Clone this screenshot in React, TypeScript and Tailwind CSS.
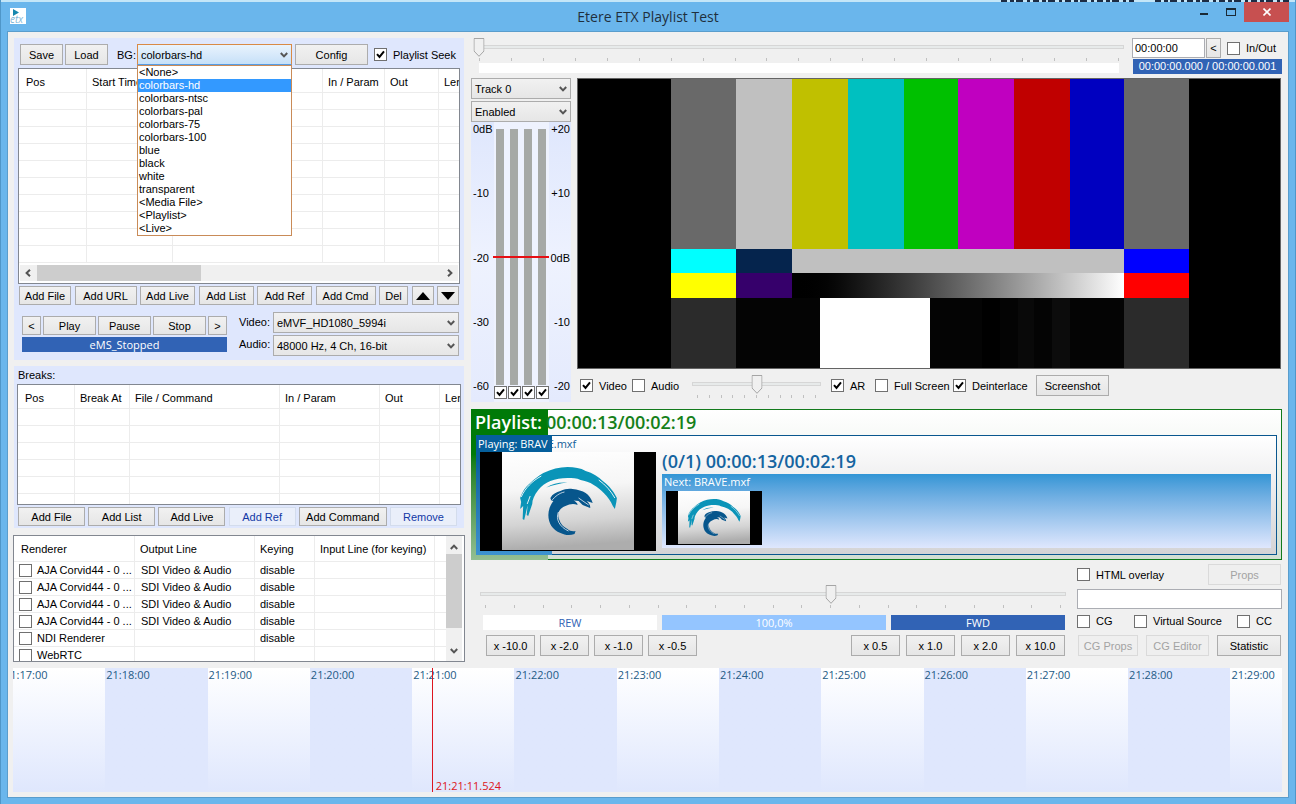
import { useState, type ReactNode } from 'react';
import clsx from 'clsx';

const BACKGROUNDS = [
  '<None>', 'colorbars-hd', 'colorbars-ntsc', 'colorbars-pal', 'colorbars-75', 'colorbars-100',
  'blue', 'black', 'white', 'transparent', '<Media File>', '<Playlist>', '<Live>',
];

const RENDERERS = [
  ['AJA Corvid44 - 0 ...', 'SDI Video & Audio', 'disable'],
  ['AJA Corvid44 - 0 ...', 'SDI Video & Audio', 'disable'],
  ['AJA Corvid44 - 0 ...', 'SDI Video & Audio', 'disable'],
  ['AJA Corvid44 - 0 ...', 'SDI Video & Audio', 'disable'],
  ['NDI Renderer', '', 'disable'],
  ['WebRTC', '', ''],
];

const MINUTES = [17, 18, 19, 20, 21, 22, 23, 24, 25, 26, 27, 28, 29];

function Button({ children, className, variant = 'normal', label }: {
  children: ReactNode;
  className?: string;
  variant?: 'normal' | 'flat' | 'disabled';
  label?: string;
}) {
  return (
    <button
      aria-label={label}
      disabled={variant === 'disabled'}
      className={clsx(
        'flex items-center justify-center border whitespace-nowrap shrink-0',
        variant === 'normal' && 'border-[#acacac] bg-linear-to-b from-[#f1f1f1] to-[#e6e6e6] text-black',
        variant === 'flat' && 'border-[#d3dcec] bg-[#eaeffa] text-[#1238a6]',
        variant === 'disabled' && 'border-[#dadada] bg-[#efefef] text-[#a3a3a3]',
        className
      )}
    >
      {children}
    </button>
  );
}

function Chevron({ className }: { className?: string }) {
  return (
    <svg viewBox="0 0 8 6" className={clsx('w-2 h-1.5 fill-none stroke-[#555] stroke-2 pointer-events-none', className)}>
      <path d="M0.8 1 L4 4.4 L7.2 1" />
    </svg>
  );
}

function Combo({ value, label, className, active }: { value: string; label: string; className?: string; active?: boolean }) {
  return (
    <div className={clsx('relative h-[21px]', className)}>
      <select
        aria-label={label}
        defaultValue={value}
        className={clsx(
          'appearance-none block w-full h-full border pl-[3px] outline-none',
          active
            ? 'border-[#d98a45] border-b-[#569de5] bg-linear-to-b from-[#e9f3fd] to-[#c6e0f8]'
            : 'border-[#acacac] bg-linear-to-b from-[#f1f1f1] to-[#e6e6e6]'
        )}
      >
        {active ? BACKGROUNDS.map((b) => <option key={b}>{b}</option>) : <option>{value}</option>}
      </select>
      <Chevron className="absolute right-1 top-2" />
    </div>
  );
}

function CheckBox({ checked, label, children, className }: {
  checked?: boolean;
  label?: string;
  children?: ReactNode;
  className?: string;
}) {
  return (
    <label className={clsx('flex items-center gap-1.5 whitespace-nowrap shrink-0', className)}>
      <span className="relative size-[13px] shrink-0">
        <input
          type="checkbox"
          defaultChecked={checked}
          aria-label={label}
          className="peer appearance-none block size-[13px] bg-white border border-[#707070]"
        />
        <svg viewBox="0 0 13 13" className="absolute inset-0 hidden peer-checked:block pointer-events-none fill-none stroke-black stroke-2">
          <path d="M3 6.2 L5.5 9 L10 3.4" />
        </svg>
      </span>
      {children}
    </label>
  );
}

function Slider({ value, ticks, label, className }: { value: number; ticks: number; label: string; className?: string }) {
  const [pos, setPos] = useState(value);
  return (
    <div className={clsx('relative', className)}>
      <div className="h-[19px] pt-[7px]">
        <div className="h-1 border border-[#d6d6d6] bg-[#e7eaea]" />
      </div>
      <div className="flex justify-between mx-[5px] mt-px h-[3px]">
        {Array.from({ length: ticks }, (_, i) => <i key={i} className="w-px bg-[#c0c0c0]" />)}
      </div>
      <div className="absolute top-0 inset-x-[5px]">
        <svg viewBox="0 0 11 19" className="absolute top-0 w-[11px] h-[19px] -translate-x-1/2" style={{ left: `${pos}%` }}>
          <path d="M0.5 0.5 H10.5 V13 L5.5 18.3 L0.5 13 Z" fill="#f0f0f0" stroke="#a5a5a5" />
        </svg>
      </div>
      <input
        type="range"
        aria-label={label}
        value={pos}
        onChange={(e) => setPos(Number(e.target.value))}
        className="absolute inset-0 w-full h-full opacity-0"
      />
    </div>
  );
}

function Grid({ headers, widths, rows, tail }: {
  headers: string[];
  widths: string[];
  rows: number;
  tail?: boolean;
}) {
  const cell = 'border-r border-b border-[#ececec] last:border-r-0';
  return (
    <table className="w-full table-fixed border-separate border-spacing-0">
      <colgroup>{widths.map((w, i) => <col key={i} className={w} />)}</colgroup>
      <thead>
        <tr>
          {headers.map((h) => (
            <th key={h} className={clsx(cell, 'h-6 pt-0.5 pb-0 pr-0 pl-[5px] first:pl-[7px] text-left font-normal whitespace-nowrap overflow-hidden')}>
              {h}
            </th>
          ))}
        </tr>
      </thead>
      <tbody>
        {Array.from({ length: rows }, (_, r) => (
          <tr key={r}>{headers.map((h) => <td key={h} className={clsx(cell, 'p-0 h-[17px]')} />)}</tr>
        ))}
        {tail && <tr>{headers.map((h) => <td key={h} className="p-0 h-2.5 border-r border-[#ececec] last:border-r-0" />)}</tr>}
      </tbody>
    </table>
  );
}

function Wave({ className }: { className?: string }) {
  return (
    <div className={clsx('bg-black flex justify-center pb-px', className)}>
      <svg viewBox="0 0 131 98" preserveAspectRatio="none" className="w-[75%] h-full">
        <defs>
          <linearGradient id="paper" x1="0" y1="0" x2="0.1" y2="1">
            <stop offset="0" stopColor="#ffffff" />
            <stop offset="0.4" stopColor="#f6f6f6" />
            <stop offset="0.75" stopColor="#d4d4d4" />
            <stop offset="1" stopColor="#adadad" />
          </linearGradient>
        </defs>
        <rect width="131" height="98" fill="url(#paper)" />
        <path
          fill="#0a94b8"
          d="M18 46 C20 40 23 35 28 31 C32 27 36 24 41 21 C49 17 57 15 65 15 C72 15 78 16 83 19 C90 21 96 25 100 29 C107 34 111 40 114 46 L113.5 50 L112 57 L110 54 C108 49 105 45 101 41 C98 38 95 35 91 33 C87 30 82 29 78 28 C74 26 70 26 65 26 C59 26 53 27 48 29 C43 31 39 34 36 38 C32 43 30 48 30 52 L26 64 L24.5 63 L25.5 53 L22 68 L20.5 67 L21 54 L18 57 L19 50 Z"
        />
        <path fill="none" stroke="#fafafa" strokeWidth="0.9" d="M19 45 C23 36 30 29 39 24 M96 28 C103 33 108 39 112 46 M25 52 L28 44" />
        <path fill="#0a94b8" d="M44 35.5 C50 31.5 57 30 65 30.5 C57 31.5 51 33 44 35.5 Z" />
        <path
          fill="#07568c"
          d="M48 46 C50 42 54 40 58 39 C62 37 66 36.5 70 37 C75 37.5 80 39 83 41 C86 43 89 47 90 51 L84 49 C86 51 88 53 87.5 56 L80 53 L76 49 L71 48.5 C73 49.5 75 51 75 53 C71 51 67 52 63 54 C59 55.5 57 58 56 61 C55.5 64 56 66 57 68 C58 72 61 75 65 77 C67 79 70 79.5 73 79 L72 82 C67 84 62 83 58 81 C50 78 46 71 46 63 C46 58 48 53 51 49 L49 49 Z"
        />
        <path fill="none" stroke="#e8eef4" strokeWidth="0.8" d="M49 49 C53 44 57 41 62 40 M56 60 C53 67 57 75 66 79 M76 46 L86 53" />
      </svg>
    </div>
  );
}

function ColorBars() {
  return (
    <div className="flex-1 border border-[#646464] bg-black flex" role="img" aria-label="Video preview">
      <div className="flex-[93]" />
      <div className="flex-[65] flex flex-col">
        <div className="flex-[170] bg-[#696969]" />
        <div className="flex-[24] bg-[#00ffff]" />
        <div className="flex-[25] bg-[#ffff00]" />
        <div className="flex-[70] bg-[#2b2b2b]" />
      </div>
      <div className="flex-[388] flex flex-col">
        <div className="flex-[170] flex">
          <div className="flex-[56] bg-[#c0c0c0]" />
          <div className="flex-[56] bg-[#c0c000]" />
          <div className="flex-[56] bg-[#00c0c0]" />
          <div className="flex-[54] bg-[#00c000]" />
          <div className="flex-[56] bg-[#c000c0]" />
          <div className="flex-[56] bg-[#c00000]" />
          <div className="flex-[54] bg-[#0000c0]" />
        </div>
        <div className="flex-[24] flex">
          <div className="flex-[56] bg-[#05244d]" />
          <div className="flex-[332] bg-[#c0c0c0]" />
        </div>
        <div className="flex-[25] flex">
          <div className="flex-[56] bg-[#36006b]" />
          <div className="flex-[332] bg-linear-to-r from-black to-white" />
        </div>
        <div className="flex-[70] flex">
          <div className="flex-[84] bg-[#040404]" />
          <div className="flex-[110] bg-white" />
          <div className="flex-[52] bg-[#040404]" />
          <div className="flex-[18] bg-black" />
          <div className="flex-[18] bg-[#040404]" />
          <div className="flex-[16] bg-[#090909]" />
          <div className="flex-[18] bg-[#040404]" />
          <div className="flex-[18] bg-[#0c0c0c]" />
          <div className="flex-[54] bg-[#040404]" />
        </div>
      </div>
      <div className="flex-[65] flex flex-col">
        <div className="flex-[170] bg-[#696969]" />
        <div className="flex-[24] bg-[#0000ff]" />
        <div className="flex-[25] bg-[#ff0000]" />
        <div className="flex-[70] bg-[#2b2b2b]" />
      </div>
      <div className="flex-[91]" />
    </div>
  );
}

function TitleBar() {
  return (
    <header className="relative h-[31px] border-t-2 border-[#c4e6f8] flex items-start">
      {/* bottom edge of the text in the window behind */}
      <svg className="absolute right-1 -top-0.5 w-[290px] h-0.5">
        <path d="M0 1 H133 M154 1 H290" stroke="#1c2c44" strokeWidth="2" strokeDasharray="6 3 4 2 7 4 3 3" />
      </svg>
      <svg viewBox="0 0 16 16" className="w-4 h-4 mt-1.5 ml-[9px]">
        <rect width="16" height="16" fill="#fff" />
        <path d="M3 1 L9 4.5 L3 8 Z" fill="#1787ae" />
        <text x="0" y="14.5" fontSize="10" fontStyle="italic" fill="#7fb6d8" fontFamily="Open Sans, sans-serif">etx</text>
      </svg>
      <h1 className="absolute inset-x-0 top-[5px] text-center text-[14px] leading-5 text-[#1f2f3d] font-['Open_Sans',sans-serif]">
        Etere ETX Playlist Test
      </h1>
      <div className="relative ml-auto mr-1.5 flex">
        <button aria-label="Minimize" className="w-7 h-5 flex justify-center pt-[11px]"><i className="w-2 h-0.5 bg-[#1a2a36]" /></button>
        <button aria-label="Maximize" className="w-[26px] h-5 flex justify-center pt-1.5"><i className="w-2.5 h-2 border border-t-2 border-[#1a2a36]" /></button>
        <button aria-label="Close" className="w-[45px] h-5 bg-[#c75050] flex items-center justify-center">
          <svg viewBox="0 0 8 8" className="size-2 stroke-white stroke-[1.6]"><path d="M0.5 0.5 L7.5 7.5 M7.5 0.5 L0.5 7.5" /></svg>
        </button>
      </div>
    </header>
  );
}

function PlaylistPanel() {
  const [bg, setBg] = useState('colorbars-hd');
  return (
    <section className="mx-px px-1 pt-1.5 pb-1 bg-[#dfe7fd]">
      <div className="flex items-center h-[21px] pl-0.5">
        <Button className="w-[43px] h-[21px]">Save</Button>
        <Button className="w-[43px] h-[21px] ml-0.5">Load</Button>
        <span className="w-[29px] pl-[9px] shrink-0">BG:</span>
        <div className="relative w-[155px] shrink-0">
          <Combo active value="colorbars-hd" label="BG" />
          <ul role="listbox" aria-label="Backgrounds" className="absolute z-10 top-full inset-x-0 bg-white border border-[#c98b58] leading-[13px]">
            {BACKGROUNDS.map((b) => (
              <li
                key={b}
                role="option"
                aria-selected={b === bg}
                onClick={() => setBg(b)}
                className={clsx('px-px', b === bg && 'bg-[#3399ff] text-white')}
              >
                {b}
              </li>
            ))}
          </ul>
        </div>
        <Button className="w-[73px] h-[21px] ml-[3px]">Config</Button>
        <CheckBox checked className="ml-1.5">Playlist Seek</CheckBox>
      </div>

      <div className="mt-[3px] bg-white border border-[#828790]">
        <Grid
          headers={['Pos', 'Start Time', '', 'In / Param', 'Out', 'Len']}
          widths={['w-[68px]', 'w-[86px]', 'w-[150px]', 'w-[62px]', 'w-[54px]', '']}
          rows={10}
        />
        <div className="my-0.5 mx-px h-4 flex items-center bg-[#f0f0f0]">
          <Chevron className="w-4 rotate-90" />
          <div className="ml-px w-[164px] h-4 bg-[#cdcdcd]" />
          <Chevron className="w-4 -rotate-90 ml-auto" />
        </div>
      </div>

      <div className="mt-0.5 pl-px pr-px flex justify-between">
        <Button className="w-[52px] h-[19px]">Add File</Button>
        <Button className="w-[62px] h-[19px]">Add URL</Button>
        <Button className="w-[55px] h-[19px]">Add Live</Button>
        <Button className="w-[55px] h-[19px]">Add List</Button>
        <Button className="w-[55px] h-[19px]">Add Ref</Button>
        <Button className="w-[60px] h-[19px]">Add Cmd</Button>
        <Button className="w-[29px] h-[19px]">Del</Button>
        <Button className="w-[22px] h-[19px]" label="Move up">
          <svg viewBox="0 0 14 8" className="w-3.5 h-2"><path d="M0 8 L7 0 L14 8 Z" /></svg>
        </Button>
        <Button className="w-[22px] h-[19px]" label="Move down">
          <svg viewBox="0 0 14 8" className="w-3.5 h-2"><path d="M0 0 L7 8 L14 0 Z" /></svg>
        </Button>
      </div>

      <div className="mt-[7px] pl-1 pr-px flex">
        <div className="w-[205px] pt-1 shrink-0">
          <div className="flex gap-0.5">
            <Button className="w-[19px] h-[19px]">&lt;</Button>
            <Button className="w-[53px] h-[19px]">Play</Button>
            <Button className="w-[53px] h-[19px]">Pause</Button>
            <Button className="w-[53px] h-[19px]">Stop</Button>
            <Button className="w-[19px] h-[19px]">&gt;</Button>
          </div>
          <div className="mt-0.5 h-[15px] leading-[15px] bg-[#3163b5] text-white text-center font-['Open_Sans',sans-serif]">eMS_Stopped</div>
        </div>
        <div className="flex-1 ml-3 grid grid-cols-[34px_1fr] gap-y-0.5">
          <span className="pt-[3px]">Video:</span>
          <Combo value="eMVF_HD1080_5994i" label="Video" />
          <span className="pt-0.5">Audio:</span>
          <Combo value="48000 Hz, 4 Ch, 16-bit" label="Audio" />
        </div>
      </div>
    </section>
  );
}

function BreaksPanel() {
  return (
    <section className="mt-1.5 mx-px px-[3px] pb-0.5 bg-[#dfe7fd]">
      <h2 className="h-[18px] leading-[18px] pl-px">Breaks:</h2>
      <div className="bg-white border border-[#828790]">
        <Grid
          headers={['Pos', 'Break At', 'File / Command', 'In / Param', 'Out', 'Len']}
          widths={['w-[57px]', 'w-[55px]', 'w-[150px]', 'w-[100px]', 'w-[60px]', '']}
          rows={5}
          tail
        />
      </div>
      <div className="mt-0.5 pl-px pr-1 flex justify-between">
        <Button className="w-[67px] h-[19px]">Add File</Button>
        <Button className="w-[67px] h-[19px]">Add List</Button>
        <Button className="w-[67px] h-[19px]">Add Live</Button>
        <Button className="w-[67px] h-[19px]" variant="flat">Add Ref</Button>
        <Button className="w-[88px] h-[19px]">Add Command</Button>
        <Button className="w-[67px] h-[19px]" variant="flat">Remove</Button>
      </div>
    </section>
  );
}

function RendererPanel() {
  const line = 'border-r border-b border-[#ececec] last:border-r-0';
  return (
    <section className="mt-[7px] h-[127px] bg-white border border-[#828790] flex overflow-hidden">
      <div className="flex-1">
        <table className="w-full table-fixed border-separate border-spacing-0">
          <colgroup>
            <col className="w-[121px]" />
            <col className="w-[120px]" />
            <col className="w-[60px]" />
            <col className="w-[120px]" />
            <col />
          </colgroup>
          <thead>
            <tr>
              {['Renderer', 'Output Line', 'Keying', 'Input Line (for keying)', ''].map((h) => (
                <th key={h} className={clsx(line, 'h-[26px] py-0 pr-0 pl-[5px] first:pl-[7px] text-left font-normal whitespace-nowrap')}>{h}</th>
              ))}
            </tr>
          </thead>
          <tbody>
            {RENDERERS.map(([name, output, keying], i) => (
              <tr key={i}>
                <td className={clsx(line, 'h-[17px] py-0 pr-0 pl-[5px] overflow-hidden')}><CheckBox className="gap-[5px]">{name}</CheckBox></td>
                <td className={clsx(line, 'py-0 pr-0 pl-1.5 whitespace-nowrap')}>{output}</td>
                <td className={clsx(line, 'py-0 pr-0 pl-[5px]')}>{keying}</td>
                <td className={clsx(line, 'p-0')} />
                <td className={clsx(line, 'p-0')} />
              </tr>
            ))}
          </tbody>
        </table>
      </div>
      <div className="w-4 mr-0.5 bg-[#f0f0f0] flex flex-col items-center">
        <Chevron className="mt-2 mb-1 rotate-180" />
        <div className="w-full h-[74px] bg-[#cdcdcd]" />
        <Chevron className="mt-auto mb-[7px]" />
      </div>
    </section>
  );
}

function AudioMeter() {
  return (
    <div className="w-[100px] shrink-0 flex flex-col">
      <Combo value="Track 0" label="Track" />
      <Combo value="Enabled" label="Track state" className="mt-0.5" />
      <div className="h-[280px] flex bg-[#eef2fe]">
        <div className="w-[23px] pl-0.5 pb-[9px] flex flex-col justify-between bg-linear-to-b from-[#dfe7fd] via-[#eef2fe] to-[#e4eafd] whitespace-nowrap">
          <span>0dB</span><span>-10</span><span>-20</span><span>-30</span><span>-60</span>
        </div>
        <div className="relative w-[55px] pt-[7px]">
          <div className="flex gap-px">
            {[1, 2, 3, 4].map((ch) => (
              <div key={ch} className="w-[13px]">
                <div className="w-2 h-64 ml-0.5 mb-px bg-[#a6a9a6]" />
                <CheckBox checked label={`Channel ${ch}`} />
              </div>
            ))}
          </div>
          <div className="absolute top-[134px] -left-px right-0 h-0.5 bg-[#e60f14]" />
        </div>
        <div className="flex-1 pr-px pb-[9px] flex flex-col justify-between items-end bg-linear-to-b from-[#dfe7fd] via-[#eef2fe] to-[#e4eafd] whitespace-nowrap">
          <span>+20</span><span>+10</span><span>0dB</span><span>-10</span><span>-20</span>
        </div>
      </div>
    </div>
  );
}

function NowPlaying() {
  return (
    <section className="relative mt-[7px] border border-[#127a1c] bg-linear-to-b from-white to-[#d3dfd3] font-['Open_Sans',sans-serif]">
      <div className="absolute -left-px -top-px -bottom-px w-[77px] bg-linear-to-b from-[#007a08] from-30% to-[#93bf93]" />
      <div className="relative h-[25px] pl-[3px] flex gap-1 text-[18px] leading-[25px] font-semibold">
        <span className="text-white w-[67px]">Playlist:</span>
        <span className="text-[#158019]">00:00:13/00:02:19</span>
      </div>
      <div className="relative mx-1 mb-1 border border-[#0a578f] bg-linear-to-b from-white to-[#d4d4d6]">
        <div className="absolute -left-px -top-px -bottom-px w-[76px] bg-linear-to-b from-[#055f9c] from-20% to-[#3d93d0]" />
        <div className="relative h-4 leading-[15px] pl-px text-white">
          Playing: BRAV<span className="text-[#155f9a]">E.mxf</span>
        </div>
        <div className="relative flex pl-[3px] pr-[5px] pb-[3px]">
          <Wave className="w-44 h-[99px]" />
          <div className="flex-1 ml-1.5">
            <div className="h-[22px] leading-[19px] text-[18px] font-semibold text-[#1464a0]">(0/1) 00:00:13/00:02:19</div>
            <div className="pb-[3px] bg-linear-to-b from-[#3095d5] to-[#dfe7fd]">
              <div className="h-[17px] leading-[16px] pl-0.5 text-white">Next: BRAVE.mxf</div>
              <Wave className="ml-1 w-24 h-[54px]" />
            </div>
          </div>
        </div>
      </div>
    </section>
  );
}

function SpeedControls() {
  const btn = 'w-[49px] h-[21px]';
  return (
    <div className="flex-1 pt-[25px] pl-[9px]">
      <Slider value={60} ticks={21} label="Playback rate" />
      <div className="mt-[7px] ml-[3px] mr-px flex gap-[5px] h-[15px] leading-[15px] text-center font-['Open_Sans',sans-serif]">
        <div className="flex-[174] bg-white text-[#3163b5]">REW</div>
        <div className="flex-[224] bg-[#94c5ff] text-white">100,0%</div>
        <div className="flex-[174] bg-[#3163b5] text-white">FWD</div>
      </div>
      <div className="mt-[5px] ml-1.5 mr-px flex justify-between">
        <div className="flex gap-[5px]">
          <Button className={btn}>x -10.0</Button>
          <Button className={btn}>x -2.0</Button>
          <Button className={btn}>x -1.0</Button>
          <Button className={btn}>x -0.5</Button>
        </div>
        <div className="flex gap-1.5">
          <Button className={btn}>x 0.5</Button>
          <Button className={btn}>x 1.0</Button>
          <Button className={btn}>x 2.0</Button>
          <Button className={btn}>x 10.0</Button>
        </div>
      </div>
    </div>
  );
}

function OverlayControls() {
  return (
    <div className="w-[205px] ml-[11px] pt-1 shrink-0">
      <div className="flex justify-between pr-px">
        <CheckBox>HTML overlay</CheckBox>
        <Button variant="disabled" className="w-[73px] h-[21px]">Props</Button>
      </div>
      <input aria-label="Overlay URL" className="mt-1 block w-full h-5 px-1 bg-white border border-[#abadb3]" />
      <div className="flex mt-[5px]">
        <CheckBox className="w-[57px]">CG</CheckBox>
        <CheckBox className="w-[103px]">Virtual Source</CheckBox>
        <CheckBox>CC</CheckBox>
      </div>
      <div className="flex justify-between mt-[7px] pl-px pr-px">
        <Button variant="disabled" className="w-[60px] h-[21px]">CG Props</Button>
        <Button variant="disabled" className="w-[63px] h-[21px]">CG Editor</Button>
        <Button className="w-[64px] h-[21px]">Statistic</Button>
      </div>
    </div>
  );
}

function Timeline() {
  return (
    <section className="relative mt-1.5 h-[124px] ml-[5px] mr-1.5 overflow-hidden font-['Open_Sans',sans-serif]">
      <div className="flex h-full -ml-2.5">
        {MINUTES.map((m, i) => (
          <div
            key={m}
            className={clsx(
              'h-full pl-px whitespace-nowrap text-[#235a85] bg-linear-to-b to-[#dfe7fd]',
              i === MINUTES.length - 1 ? 'flex-1' : 'flex-2',
              m % 2 ? 'from-white' : 'from-[#dfe7fd]'
            )}
          >
            21:{m}:00
          </div>
        ))}
      </div>
      <div className="absolute left-[33%] inset-y-0 border-l border-[#dd1620] flex items-end pl-[3px] text-[#dd1620] leading-[13px]">
        21:21:11.524
      </div>
    </section>
  );
}

export default function App() {
  return (
    <div className="min-h-screen flex flex-col bg-[#6ab6ec] border-x border-[#4f96c8] text-black text-[11px] leading-[14px] font-['Liberation_Sans',Arial,sans-serif]">
      <TitleBar />
      <main className="flex-1 mx-1.5 mb-1.5 border border-[#5a9dcc] bg-[#f0f0f0] pt-1.5 pb-[5px]">
        <div className="flex pl-[5px] pr-1.5">
          <div className="w-[452px] shrink-0">
            <PlaylistPanel />
            <BreaksPanel />
            <RendererPanel />
          </div>
          <div className="flex-1 ml-1.5 flex flex-col">
            <div className="flex h-9">
              <div className="flex-1 pl-[3px]">
                <Slider value={0} ticks={21} label="Seek" />
                <div className="mt-0.5 mx-[5px] h-2.5 bg-white" />
              </div>
              <div className="w-[150px] ml-2 shrink-0">
                <div className="flex">
                  <input aria-label="Time code" defaultValue="00:00:00" className="w-[73px] h-5 pl-0.5 bg-white border border-[#abadb3]" />
                  <Button className="w-[15px] h-5 ml-px">&lt;</Button>
                  <CheckBox className="ml-1.5">In/Out</CheckBox>
                </div>
                <div className="mt-px ml-px h-[15px] leading-[15px] bg-[#3163b5] text-white text-center">00:00:00.000 / 00:00:00.001</div>
              </div>
            </div>
            <div className="flex mt-1">
              <AudioMeter />
              <div className="flex-1 ml-1.5 mr-px flex flex-col">
                <ColorBars />
                <div className="mt-1.5 h-[27px] pl-[3px] flex items-start">
                  <CheckBox checked className="w-[52px] h-[21px]">Video</CheckBox>
                  <CheckBox className="w-[60px] h-[21px]">Audio</CheckBox>
                  <Slider value={50} ticks={11} label="Volume" className="w-[129px]" />
                  <CheckBox checked className="ml-2.5 w-11 h-[21px]">AR</CheckBox>
                  <CheckBox className="w-[78px] h-[21px]">Full Screen</CheckBox>
                  <CheckBox checked className="w-[83px] h-[21px]">Deinterlace</CheckBox>
                  <Button className="w-[73px] h-[21px]">Screenshot</Button>
                </div>
              </div>
            </div>
            <NowPlaying />
            <div className="flex">
              <SpeedControls />
              <OverlayControls />
            </div>
          </div>
        </div>
        <Timeline />
      </main>
    </div>
  );
}
